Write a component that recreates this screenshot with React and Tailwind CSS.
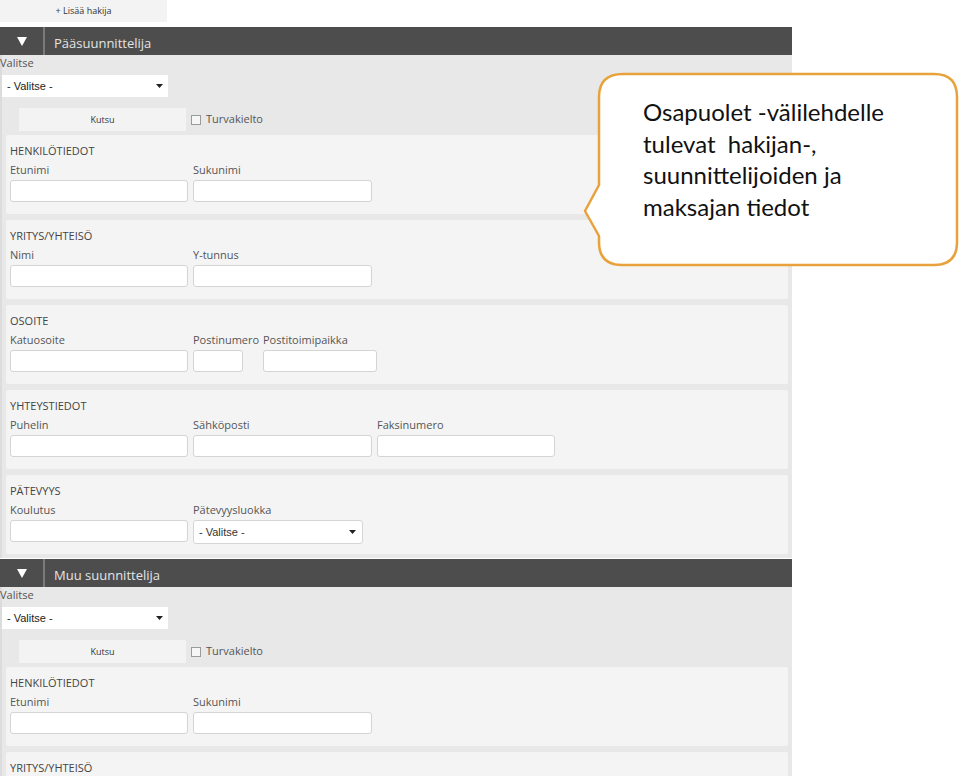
import React from 'react';

const ui = { fontFamily: '"Open Sans", "Noto Sans", sans-serif' };
const arial = { fontFamily: '"Liberation Sans", Arial, sans-serif' };

const Arrow = () => (
  <svg width="7" height="4" viewBox="0 0 7 4" className="shrink-0">
    <path d="M0 0 H7 L3.5 4 Z" fill="#222" />
  </svg>
);

const Field = ({ label, col = 178, w, select }) => (
  <div className="flex flex-col" style={{ width: col }}>
    <div className="text-[11px] leading-[14px] text-[#555] whitespace-nowrap">{label}</div>
    {select ? (
      <div
        className="mt-[3px] h-[24px] bg-white border border-[#d6d6d6] rounded-[3px] flex items-center justify-between pl-[5px] pr-[6px] text-[11px] text-[#333]"
        style={{ ...arial, width: w || col }}
      >
        <span>- Valitse -</span>
        <Arrow />
      </div>
    ) : (
      <div
        className="mt-[3px] h-[22px] bg-white border border-[#d4d4d4] rounded-[3px]"
        style={{ width: w || col }}
      />
    )}
  </div>
);

const Card = ({ title, fields }) => (
  <div className="h-[79px] bg-[#f4f4f4] pt-[9px] pl-[4px] rounded-[2px]">
    <div className="text-[11px] leading-[14px] text-[#444] uppercase">{title}</div>
    <div className="flex gap-[5px] mt-[5px]">
      {fields.map((f) => (
        <Field key={f.label} {...f} />
      ))}
    </div>
  </div>
);

const cards = [
  { title: 'Henkilötiedot', fields: [{ label: 'Etunimi' }, { label: 'Sukunimi', col: 179 }] },
  { title: 'Yritys/yhteisö', fields: [{ label: 'Nimi' }, { label: 'Y-tunnus', col: 179 }] },
  {
    title: 'Osoite',
    fields: [
      { label: 'Katuosoite' },
      { label: 'Postinumero', col: 65, w: 50 },
      { label: 'Postitoimipaikka', col: 114 },
    ],
  },
  {
    title: 'Yhteystiedot',
    fields: [{ label: 'Puhelin' }, { label: 'Sähköposti', col: 179 }, { label: 'Faksinumero' }],
  },
  {
    title: 'Pätevyys',
    fields: [{ label: 'Koulutus' }, { label: 'Pätevyysluokka', col: 170, select: true }],
  },
];

// second block is cut by the window: its second card only shows the title
const cardsBelow = [cards[0], { title: 'Yritys/yhteisö', fields: [] }];

const Section = ({ title, items }) => (
  <div className="w-[792px]">
    {/* header bar */}
    <div className="h-[28px] bg-[#4d4d4d] flex">
      <div className="w-[43px] flex items-center justify-center pt-[1px]">
        <svg width="10" height="9" viewBox="0 0 10 9">
          <path d="M0 0 H10 L5 9 Z" fill="#fff" />
        </svg>
      </div>
      <div className="w-[2px] bg-[#7a7a7a]" />
      <div className="pl-[9px] pt-[8px] text-[13px] leading-[17px] text-[#e4e4e4]">{title}</div>
    </div>

    <div className="bg-[#e8e8e8] pb-[4px] border-l-2 border-[#dcdcdc]">
      <div className="text-[11px] leading-[16px] text-[#555] -ml-[2px]">Valitse</div>
      <div
        className="mt-[4px] w-[166px] h-[22px] bg-white flex items-center justify-between pl-[5px] pr-[5px] text-[11px] text-[#222]"
        style={arial}
      >
        <span>- Valitse -</span>
        <Arrow />
      </div>
      <div className="flex items-center mt-[11px]">
        <div className="ml-[17px] w-[167px] h-[23px] bg-[#f3f3f3] flex items-center justify-center text-[9px] text-[#333]">
          Kutsu
        </div>
        <div className="ml-[5px] w-[10px] h-[10px] border border-[#9a9a9a] bg-[#f6f6f6]" />
        <div className="ml-[5px] text-[11px] text-[#555]">Turvakielto</div>
      </div>
      <div className="mt-[4px] ml-[4px] mr-[4px] flex flex-col gap-[6px]">
        {items.map((c) => (
          <Card key={c.title} {...c} />
        ))}
      </div>
    </div>
  </div>
);

const Callout = () => (
  <div className="absolute left-[580px] top-[68px] w-[380px] h-[204px]">
    <svg width="380" height="204" viewBox="0 0 380 204" className="absolute inset-0">
      <path
        d="M43 6 H354 Q377 6 377 29 V174 Q377 197 354 197 H42 Q19 197 19 174 V168 L5 143 L19 117 V29 Q19 6 43 6 Z"
        fill="#fff"
        stroke="#e9a23b"
        strokeWidth="2.5"
        strokeLinejoin="round"
      />
    </svg>
    <div
      className="absolute left-[63px] top-[28px] text-[24px] leading-[31.5px] text-[#111]"
      style={{ fontFamily: 'Lato, "Open Sans", sans-serif' }}
    >
      Osapuolet -välilehdelle
      <br />
      tulevat&nbsp; hakijan-,
      <br />
      suunnittelijoiden ja
      <br />
      maksajan tiedot
    </div>
  </div>
);

export default function App() {
  return (
    <div className="relative w-[960px] h-[776px] overflow-hidden bg-white" style={ui}>
      <div className="w-[167px] h-[22px] bg-[#f3f3f3] flex items-center justify-center text-[9px] text-[#333]">
        + Lisää hakija
      </div>
      <div className="mt-[5px]">
        <Section title="Pääsuunnittelija" items={cards} />
      </div>
      <div className="mt-[1px]">
        <Section title="Muu suunnittelija" items={cardsBelow} />
      </div>
      <Callout />
    </div>
  );
}
